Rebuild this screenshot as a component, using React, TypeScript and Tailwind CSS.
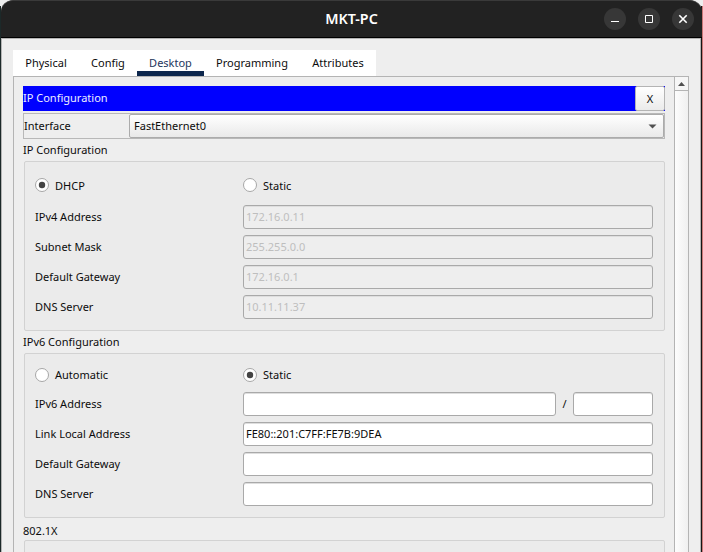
import type { ReactNode } from "react";

function Radio({ label, checked, labelShift = "top-[1px]" }: { label: string; checked?: boolean; labelShift?: string }) {
  return (
    <div className="flex h-4 items-center gap-[6px]">
      <svg width="14" height="14" viewBox="0 0 14 14" className="shrink-0">
        <circle cx="7" cy="7" r="6.5" fill="#fff" stroke="#a6a6a6" />
        {checked && <circle cx="7" cy="7" r="3.2" fill="#444" />}
      </svg>
      <span className={`relative ${labelShift}`}>{label}</span>
    </div>
  );
}

function Field({ value, disabled, width = "w-[410px]" }: { value?: string; disabled?: boolean; width?: string }) {
  return (
    <div
      className={`flex h-6 items-center rounded-[3px] border border-[#a9a9a9] pl-[2px] shadow-[inset_0_1px_0_#dedede] ${width} ${
        disabled ? "bg-[#eeeeee] text-[#bebebe]" : "bg-white"
      }`}
    >
      {value}
    </div>
  );
}

function Row({ label, children }: { label: string; children: ReactNode }) {
  return (
    <div className="flex h-6 items-center">
      <span className="w-[208px]">{label}</span>
      {children}
    </div>
  );
}

function Group({ className, children }: { className: string; children?: ReactNode }) {
  return (
    <div className={`ml-px w-[641px] rounded-[2px] border border-[#d2d2d2] bg-[#ebebeb] pl-[10px] ${className}`}>
      {children}
    </div>
  );
}

function WindowButton({ children }: { children: ReactNode }) {
  return (
    <div className="size-[22px] rounded-full bg-[#373737]">
      <svg width="22" height="22" viewBox="0 0 22 22" fill="none" stroke="#fff">
        {children}
      </svg>
    </div>
  );
}

const tabs = [
  { name: "Physical", width: "w-[66px]" },
  { name: "Config", width: "w-[58px]" },
  { name: "Desktop", width: "w-[67px]" },
  { name: "Programming", width: "w-[96px]" },
  { name: "Attributes", width: "w-[76px]" },
];

export default function App() {
  return (
    <div className="h-[552px] w-[703px] overflow-hidden bg-[linear-gradient(90deg,#1c2929_0_1px,#eee_1px_701px,#151515_701px_702px,#cc7777_702px)] font-['Noto_Sans',sans-serif] text-[11px] leading-4 whitespace-nowrap text-[#0c0c0c]">
      <div className="h-[38px] bg-[linear-gradient(180deg,#eeeeee_0_6px,transparent_6px)]">
        <header className="ml-px flex h-[38px] w-[701px] items-center rounded-t-[12px] border-t border-b border-t-[#3a3a3a] border-b-black bg-[#222222] pr-[8px]">
          <div className="w-[98px]" />
          <h1 className="flex-1 text-center text-[14.3px] font-semibold text-white">MKT-PC</h1>
          <div className="flex w-[90px] gap-3">
            <WindowButton>
              <path d="M7 13.5H15" />
            </WindowButton>
            <WindowButton>
              <path d="M7.5 7.5H14.5V14.5H7.5Z" />
            </WindowButton>
            <WindowButton>
              <path d="M7.3 7.3L14.7 14.7M14.7 7.3L7.3 14.7" strokeWidth="1.6" />
            </WindowButton>
          </div>
        </header>
      </div>

      <main className="ml-px h-[514px] w-[700px] border-x border-t border-[#b4b4b4] bg-[#eeeeee] pt-[11px] pl-[11px]">
        <nav className="flex h-[26px] w-[363px] bg-white">
          {tabs.map((tab) => (
            <div
              key={tab.name}
              className={`flex h-[26px] items-center justify-center ${tab.width} ${
                tab.name === "Desktop" ? "border-b-[5px] border-[#0d274d] pt-[5px] text-[#24365c]" : ""
              }`}
            >
              {tab.name}
            </div>
          ))}
        </nav>

        <div className="flex h-[480px] w-[676px] border-x border-t border-[#b4b4b4]">
          <section className="w-[660px] pt-[9px] pl-[9px]">
            <div className="flex h-[25px] w-[642px] items-center bg-[#0000ff] text-[#eeeeff]">
              <span className="flex-1 pb-[2px]">IP Configuration</span>
              <button className="h-[25px] w-[30px] rounded-[2px] border border-[#b4b4b4] bg-linear-to-b from-white to-[#ebebeb] text-[#0c0c0c]">
                X
              </button>
            </div>

            <div className="mt-[2px] flex h-[26px] w-[642px] items-center border border-[#b8b8b8]">
              <span className="w-[105px]">Interface</span>
              <div className="flex h-6 flex-1 items-center justify-between rounded-[2px] border border-[#ababab] bg-linear-to-b from-white to-[#e9e9e9] pr-[6px] pl-1">
                <span>FastEthernet0</span>
                <svg width="9" height="5" viewBox="0 0 9 5">
                  <path d="M0.5 0.5H8.5L4.5 4.5Z" fill="#505050" />
                </svg>
              </div>
            </div>

            <h2 className="mt-[3px] h-[19px]">IP Configuration</h2>
            <Group className="h-[170px] pt-[15px]">
              <div className="flex">
                <div className="w-[208px]">
                  <Radio label="DHCP" checked />
                </div>
                <Radio label="Static" />
              </div>
              <div className="mt-[12px] flex flex-col gap-[6px]">
                <Row label="IPv4 Address">
                  <Field value="172.16.0.11" disabled />
                </Row>
                <Row label="Subnet Mask">
                  <Field value="255.255.0.0" disabled />
                </Row>
                <Row label="Default Gateway">
                  <Field value="172.16.0.1" disabled />
                </Row>
                <Row label="DNS Server">
                  <Field value="10.11.11.37" disabled />
                </Row>
              </div>
            </Group>

            <h2 className="mt-[3px] h-[19px]">IPv6 Configuration</h2>
            <Group className="h-[165px] pt-[13px]">
              <div className="flex">
                <div className="w-[208px]">
                  <Radio label="Automatic" labelShift="top-0" />
                </div>
                <Radio label="Static" checked labelShift="top-0" />
              </div>
              <div className="mt-[9px] flex flex-col gap-[6px]">
                <Row label="IPv6 Address">
                  <Field width="w-[313px]" />
                  <span className="w-[17px] text-center">/</span>
                  <Field width="w-[80px]" />
                </Row>
                <Row label="Link Local Address">
                  <Field value="FE80::201:C7FF:FE7B:9DEA" />
                </Row>
                <Row label="Default Gateway">
                  <Field />
                </Row>
                <Row label="DNS Server">
                  <Field />
                </Row>
              </div>
            </Group>

            <h2 className="mt-[5px] h-[17px]">802.1X</h2>
            <Group className="h-10" />
          </section>

          <aside className="flex-1 border-l border-[#b4b4b4] bg-linear-to-r from-[#fdfdfd] to-[#f0f0f0]">
            <div className="flex h-[14px] items-center justify-center border-b border-[#b4b4b4] bg-[#f6f6f6]">
              <svg width="7" height="4" viewBox="0 0 7 4">
                <path d="M3.5 0L7 4H0Z" fill="#505050" />
              </svg>
            </div>
          </aside>
        </div>
      </main>
    </div>
  );
}
